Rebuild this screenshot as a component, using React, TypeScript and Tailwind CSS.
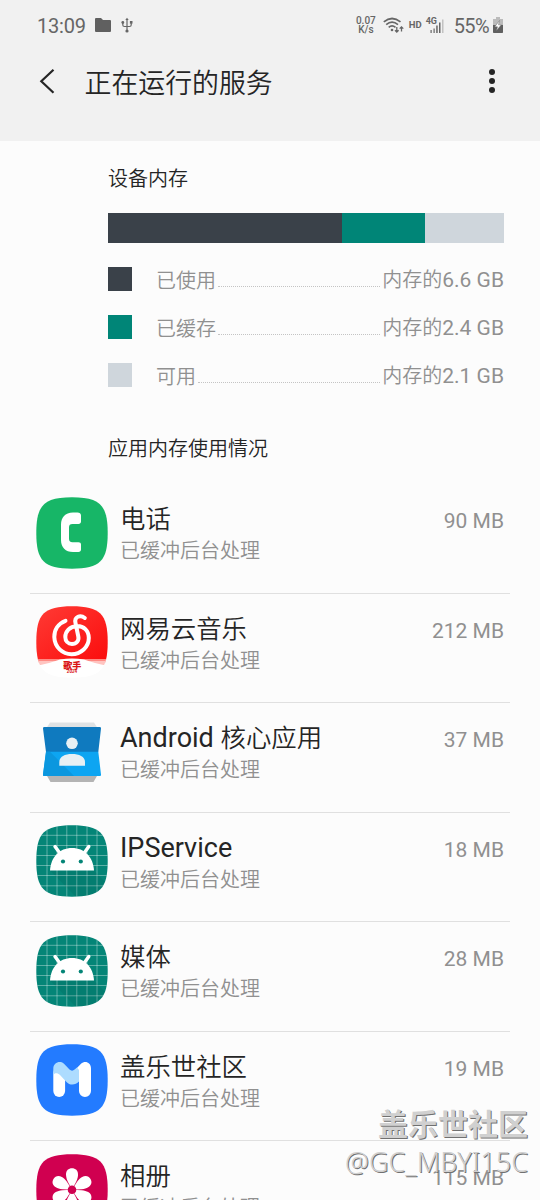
import type { ReactNode } from 'react';

const SQUIRCLE =
  'M36 .3C64 .3 71.7 8 71.7 36S64 71.7 36 71.7S.3 64 .3 36S8 .3 36 .3Z';

function PhoneIcon() {
  return (
    <svg viewBox="0 0 72 72" className="size-[72px]">
      <path d={SQUIRCLE} fill="#17b667" />
      <path
        d="M41.5 15.5H37C29 15.5 25 20.5 25 27.5V43C25 50.5 29.5 55 37 55H42.5C44 55 45 54 45 52.5V47.5C45 46 44 45.200 42.500 45.200H36.500C34 45.200 33 44 33 41.500V30.500C33 28 34 27 36.500 27H42.500C44 27 45 26 45 24.500V18.500C45 16.500 43.500 15.500 41.500 15.500Z"
        fill="#fff"
      />
    </svg>
  );
}

function MusicIcon() {
  return (
    <svg viewBox="0 0 72 72" className="size-[72px]">
      <defs>
        <linearGradient id="music-bg" x1="0" y1="0" x2="1" y2="1">
          <stop offset="0" stopColor="#ff3b35" />
          <stop offset="1" stopColor="#fb0d0d" />
        </linearGradient>
        <clipPath id="music-clip">
          <path d={SQUIRCLE} />
        </clipPath>
      </defs>
      <g clipPath="url(#music-clip)">
        <rect width="72" height="54" fill="url(#music-bg)" />
        <path d="M0 53H72V57H0Z" fill="#ff8a84" />
        <path d="M0 55H72V59H0Z" fill="#ffc4c0" />
        <path d="M0 60Q14 57 24 53.500Q36 51.500 48 53.500Q58 57 72 60V72H0Z" fill="#fff" />
      </g>
      <path
        d="M29.500 14.800C22 17.500 18.200 24 18.300 31C18.600 41 26.500 48.200 35.500 48.200C45 48.200 52.800 41 52.800 32C52.800 24.500 47.500 19.800 41 20C33.500 20.500 29.300 25.500 29.300 31C29.300 35 32 38 36 38C40.500 38 43.200 34.500 42.300 30.500L39.500 17C38 10.500 44.500 8.500 48.800 12"
        fill="none"
        stroke="#fff"
        strokeWidth="4"
        strokeLinecap="round"
      />
      <text x="36.300" y="63" textAnchor="middle" fontSize="9" fontWeight="900" fill="#d91414" fontFamily="'Noto Sans CJK SC', sans-serif">
        歌手
      </text>
      <text x="36" y="67.300" textAnchor="middle" fontSize="4.500" fontWeight="700" fill="#d91414" fontFamily="Roboto, sans-serif">
        2024
      </text>
    </svg>
  );
}

function ContactsIcon() {
  return (
    <svg viewBox="0 0 72 72" className="size-[72px]">
      <path d="M14 6.500H58L61.500 12H10.500Z" fill="#dfe2e4" />
      <path d="M10.500 59H61.500L57.500 66H14.500Z" fill="#b4b4b4" />
      <path d="M8 11H64Q65.200 11 65 12.500L62.300 36H10L7 12.500Q6.800 11 8 11Z" fill="#0f7abf" />
      <path d="M10 35.700H62.300L65 58.500Q65.200 60 64 60H8Q6.800 60 7 58.500Z" fill="#0da5f2" />
      <path d="M10 35.700H14L38 60H8Q6.800 60 7 58.500Z" fill="#0b97df" />
      <circle cx="36" cy="27.300" r="5.800" fill="#e8f0f4" />
      <path d="M23.300 49.700V46C23.300 40.500 29 38 36 38S49 40.500 49 46V49.700Z" fill="#e8f0f4" />
    </svg>
  );
}

function AndroidIcon() {
  return (
    <svg viewBox="0 0 72 72" className="size-[72px]">
      <defs>
        <clipPath id="android-clip">
          <path d={SQUIRCLE} />
        </clipPath>
      </defs>
      <path d={SQUIRCLE} fill="#048577" />
      <g clipPath="url(#android-clip)">
        <path
          d="M11 0V72M21 0V72M30.800 0V72M40.800 0V72M51 0V72M61 0V72M0 10.300H72M0 20.500H72M0 30.500H72M0 40.500H72M0 50.500H72M0 60.800H72"
          stroke="#fff"
          strokeOpacity=".4"
          strokeWidth=".9"
        />
        <path d="M14 45.500H58L72 60V72H40Z" fill="#000" opacity=".06" />
      </g>
      <path d="M14 45.500C14.800 32 23.500 23 36 23S57.200 32 58 45.500Z" fill="#fff" />
      <path d="M19 21.500L24.500 29M52.800 21.500L47.500 29" stroke="#fff" strokeWidth="3.400" strokeLinecap="round" />
      <circle cx="27" cy="36.500" r="2.100" fill="#048577" />
      <circle cx="44.800" cy="36.500" r="2.100" fill="#048577" />
    </svg>
  );
}

function CommunityIcon() {
  return (
    <svg viewBox="0 0 72 72" className="size-[72px]">
      <path d={SQUIRCLE} fill="#237bff" />
      <rect x="17.300" y="23" width="11.800" height="30" rx="5.900" fill="#fff" />
      <path d="M43 47V37L38 27L45 19.800C49 16.200 55 18.500 55 24.500V47A6 6 0 0 1 43 47Z" fill="#fff" />
      <path
        d="M17.300 31V24.500C17.300 18.500 24.500 16 28.500 20.200L33.500 25.500C35.200 27 37 27 38.600 25.500L41 23.500L43 26V37.500C39.500 41.500 33.500 41.500 30.500 38L24 31C21.500 28.500 18.500 28.500 17.300 31Z"
        fill="#addcff"
      />
    </svg>
  );
}

function GalleryIcon() {
  return (
    <svg viewBox="0 0 72 72" className="size-[72px]">
      <path d={SQUIRCLE} fill="#d00050" />
      {[0, 60, 120, 180, 240, 300].map((angle) => (
        <path
          key={angle}
          d="M36 35.700L31.500 27C30.500 24.500 30 22.500 30 20.500C30 16.500 32.500 14.300 36 14.300S42 16.500 42 20.500C42 22.500 41.500 24.500 40.500 27Z"
          transform={`rotate(${angle} 36 35.700)`}
          fill="#fff"
        />
      ))}
      <circle cx="36" cy="35.700" r="4.300" fill="#d00050" />
    </svg>
  );
}

const memory = [
  { label: '已使用', value: '6.6 GB', color: 'bg-[#3a4149]' },
  { label: '已缓存', value: '2.4 GB', color: 'bg-[#008577]' },
  { label: '可用', value: '2.1 GB', color: 'bg-[#cfd6dc]' },
];

type App = { id: string; name: ReactNode; size: string; icon: ReactNode };

const apps: App[] = [
  { id: 'phone', name: '电话', size: '90 MB', icon: <PhoneIcon /> },
  { id: 'music', name: '网易云音乐', size: '212 MB', icon: <MusicIcon /> },
  {
    id: 'core',
    name: (
      <>
        <span className="text-[27px] font-normal">Android </span>核心应用
      </>
    ),
    size: '37 MB',
    icon: <ContactsIcon />,
  },
  { id: 'ip', name: <span className="text-[27px] font-normal">IPService</span>, size: '18 MB', icon: <AndroidIcon /> },
  { id: 'media', name: '媒体', size: '28 MB', icon: <AndroidIcon /> },
  { id: 'community', name: '盖乐世社区', size: '19 MB', icon: <CommunityIcon /> },
  { id: 'gallery', name: '相册', size: '115 MB', icon: <GalleryIcon /> },
];

function StatusBar() {
  return (
    <div className="flex h-[50px] items-center pl-[37px] pr-9 text-[#666]">
      <span className="pt-[2px] text-[20px] leading-none tracking-[-0.2px]">13:09</span>
      <svg viewBox="0 0 16 14" className="ml-[9px] h-[14px] w-4" fill="#606060">
        <path d="M1 0H6L8 2H15Q16 2 16 3V13Q16 14 15 14H1Q0 14 0 13V1Q0 0 1 0Z" />
      </svg>
      <svg viewBox="0 0 12 16" className="ml-[10px] h-4 w-3" fill="none" stroke="#666" strokeWidth="1.200">
        <path d="M6 2V14M1.800 6V8Q1.800 9.500 3.500 9.500H8.500Q10.200 9.500 10.200 8V6" />
        <path d="M4.300 3L6 .8L7.700 3Z" fill="#666" stroke="none" />
        <circle cx="6" cy="14" r="1.600" fill="#666" stroke="none" />
        <circle cx="1.800" cy="5.500" r="1.400" fill="#666" stroke="none" />
        <rect x="8.900" y="4" width="2.600" height="2.600" fill="#666" stroke="none" />
      </svg>
      <div className="ml-auto flex items-center">
        <div className="text-center text-[10px] font-medium leading-[9px]">
          <div>0.07</div>
          <div>K/s</div>
        </div>
        <svg viewBox="0 0 21 17" className="ml-[7px] h-[17px] w-[21px]" fill="none" stroke="#666" strokeWidth="1.700">
          <path d="M.8 4.800Q9 -1.800 17.500 4.800M3.200 7.600Q9 2.800 15 7.600M5.700 10.300Q9 7.600 12.500 10.300" />
          <circle cx="9" cy="13" r="1.300" fill="#666" stroke="none" />
          <path d="M13.800 10V15M12 13.200L13.800 15L15.600 13.200M18.500 14.500V9.800M16.700 11.600L18.500 9.800L20.300 11.600" strokeWidth="1.300" />
        </svg>
        <span className="ml-[5px] text-[9.500px] font-bold leading-none">HD</span>
        <div className="relative ml-1 h-[17px] w-[18px]">
          <svg viewBox="0 0 18 17" className="size-full" fill="#666">
            <path d="M4.500 13H5.700V16H4.500ZM7.500 11.500H8.700V16H7.500ZM10.200 8.500H11.700V16H10.200ZM13 5.500H14.500V16H13Z" />
            <path d="M16 2.500H17.500V16H16Z" fill="#c2c2c2" />
          </svg>
          <span className="absolute left-0 top-0 text-[9px] font-bold leading-none">4G</span>
        </div>
        <span className="ml-[10px] pt-[2px] text-[20px] leading-none tracking-[-0.600px]">55%</span>
        <svg viewBox="0 0 10 16" className="ml-[4px] mr-[1px] h-4 w-[10px]">
          <path d="M3 0H7V2H10V16H0V2H3Z" fill="#bbb" />
          <path d="M0 8H10V15Q10 16 9 16H1Q0 16 0 15Z" fill="#606060" />
          <path d="M6.500 3.500L1.800 9.800H4.500L3.500 13.500L8.300 7.800H5.500Z" fill="#fff" stroke="#707070" strokeWidth=".5" />
        </svg>
      </div>
    </div>
  );
}

function Header() {
  return (
    <header className="h-[141px] bg-[#f1f1f1]">
      <StatusBar />
      <div className="flex h-[62px] items-center pl-[39px] pr-[45px]">
        <svg viewBox="0 0 16 26" className="h-[26px] w-4" fill="none" stroke="#252525" strokeWidth="2.200">
          <path d="M14.500 1.800L2.300 13.300L14.500 24.800" />
        </svg>
        <h1 className="ml-[29.500px] pt-[6px] text-[26.900px] font-[350] leading-none text-[#252525]">正在运行的服务</h1>
        <div className="ml-auto flex flex-col gap-[3px]">
          <span className="size-[6px] rounded-full bg-[#252525]" />
          <span className="size-[6px] rounded-full bg-[#252525]" />
          <span className="size-[6px] rounded-full bg-[#252525]" />
        </div>
      </div>
    </header>
  );
}

function MemorySummary() {
  return (
    <section className="h-[343px] pl-[108px] pr-9 pt-[23px]">
      <h2 className="text-[20px] font-[350] leading-[30px] text-[#252525]">设备内存</h2>
      <div className="mt-[19px] flex h-[30px]">
        <div className="w-[234px] bg-[#3a4149]" />
        <div className="w-[83px] bg-[#008577]" />
        <div className="flex-1 bg-[#cfd6dc]" />
      </div>
      <div className="mt-6 flex flex-col gap-6">
        {memory.map((item) => (
          <div key={item.label} className="flex h-6 items-center text-[20px] font-[350] leading-none text-[#909090]">
            <div className={`size-6 ${item.color}`} />
            <span className="ml-6 pt-[3px]">{item.label}</span>
            <div className="mx-[2px] mt-[15px] flex-1 border-b border-dotted border-[#c4c4c4]" />
            <span className="pt-[3px]">
              内存的<span className="text-[21px] font-normal">{item.value}</span>
            </span>
          </div>
        ))}
      </div>
      <h2 className="mt-[47px] text-[20px] font-[350] leading-[30px] text-[#252525]">应用内存使用情况</h2>
    </section>
  );
}

function AppRow({ app }: { app: App }) {
  return (
    <li className="mx-[30px] flex h-[109.500px] shrink-0 border-b border-[#e0e0e0] pl-[6px] pr-[6px] pt-[12.500px]">
      {app.icon}
      <div className="ml-3 pt-[6.500px]">
        <div className="h-[33px] text-[25.400px] font-[350] leading-[33px] text-[#252525]">{app.name}</div>
        <div className="text-[20px] font-[350] leading-[31px] text-[#909090]">已缓冲后台处理</div>
      </div>
      <span className="ml-auto pt-[9.500px] text-[21px] leading-[30px] text-[#909090]">{app.size}</span>
    </li>
  );
}

export default function App() {
  return (
    <main className="relative h-[1200px] w-[540px] overflow-hidden bg-[#fcfcfc] font-['Roboto','Noto_Sans_CJK_SC',sans-serif]">
      <Header />
      <MemorySummary />
      <ul className="flex flex-col">
        {apps.map((app) => (
          <AppRow key={app.id} app={app} />
        ))}
      </ul>

      {/* Watermark */}
      <div className="absolute right-3 top-[1105px] text-right font-['Noto_Sans','Noto_Sans_CJK_SC',sans-serif] text-[#d0d0d0] [text-shadow:1px_1px_0_#707070]">
        <div className="text-[30px] font-bold leading-[38px]">盖乐世社区</div>
        <div className="text-[26.800px] font-light leading-[38px] tracking-[0.150px]">@GC_MBYI15C</div>
      </div>
    </main>
  );
}
